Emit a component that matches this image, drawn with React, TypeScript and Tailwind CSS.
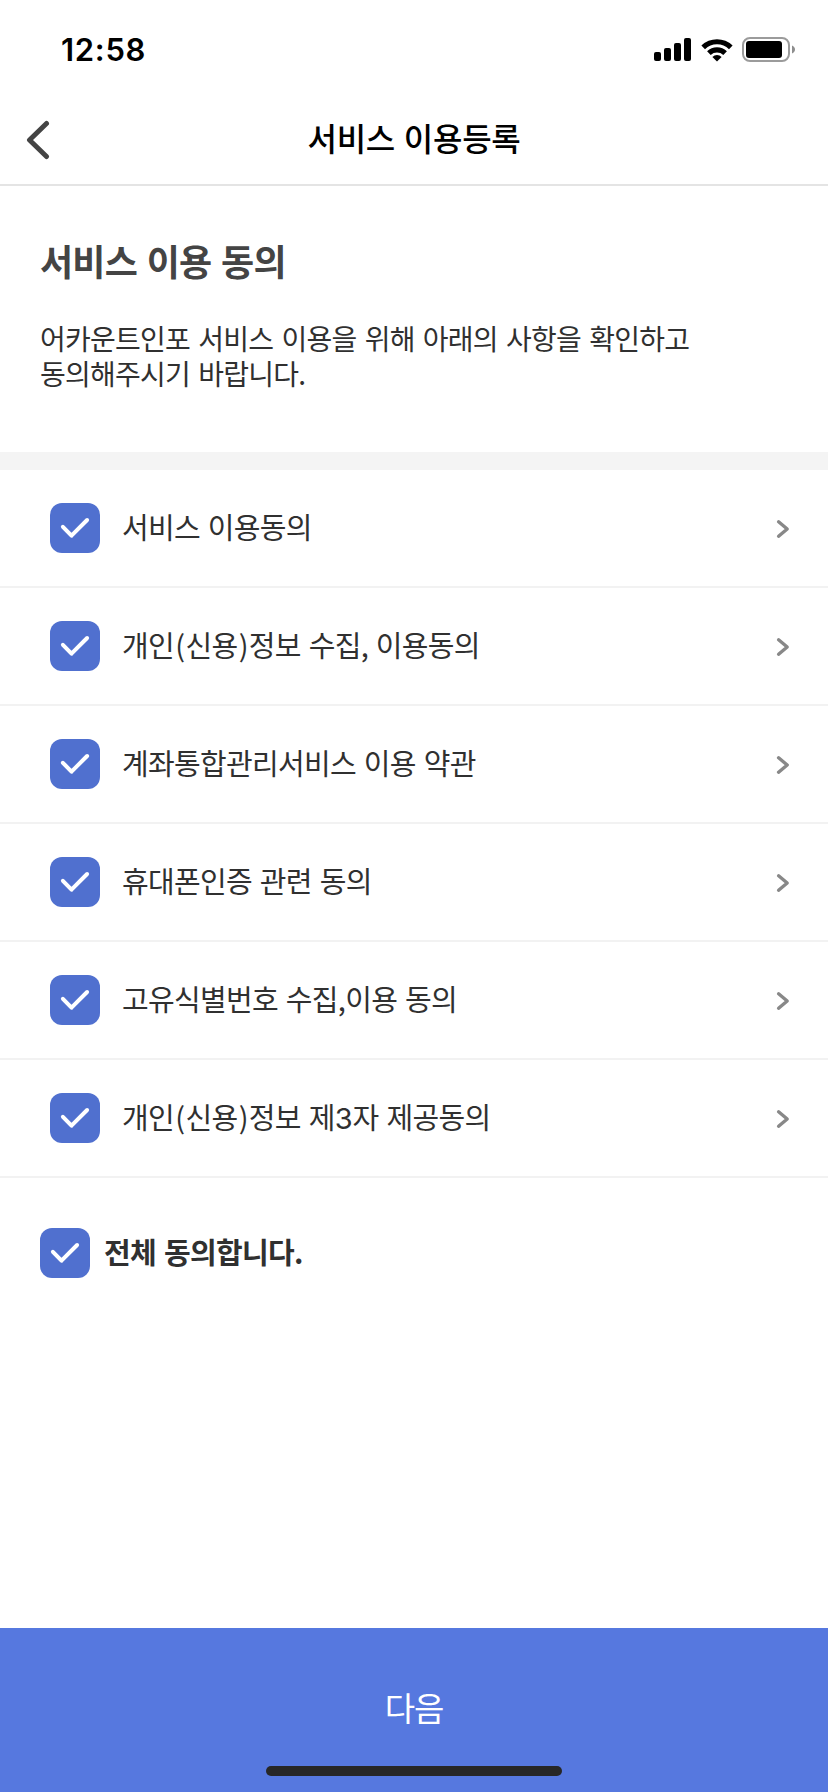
import { useState } from "react";

type Agreement = {
  id: number;
  label: string;
};

const AGREEMENTS: Agreement[] = [
  { id: 1, label: "서비스 이용동의" },
  { id: 2, label: "개인(신용)정보 수집, 이용동의" },
  { id: 3, label: "계좌통합관리서비스 이용 약관" },
  { id: 4, label: "휴대폰인증 관련 동의" },
  { id: 5, label: "고유식별번호 수집,이용 동의" },
  { id: 6, label: "개인(신용)정보 제3자 제공동의" },
];

function StatusBar() {
  return (
    <div className="flex h-[98px] items-center justify-between pr-8 pl-[61px]">
      <span className="pt-px font-['Inter',sans-serif] text-[31px] leading-none font-semibold tracking-[0.7px] text-black">
        12:58
      </span>
      <div className="flex items-center pt-[2px]">
        <svg width="38" height="24" viewBox="0 0 38 24" className="mr-[9px]">
          <rect x="0" y="14" width="7" height="9" rx="2" />
          <rect x="10" y="10" width="7" height="13" rx="2" />
          <rect x="20" y="5" width="7" height="18" rx="2" />
          <rect x="30" y="0" width="7" height="23" rx="2" />
        </svg>
        <svg width="32" height="24" viewBox="0 0 32 24" className="mr-[9px]">
          <path d="M0.4 7.6a22.2 22.2 0 0 1 31.2 0l-3.6 3.6a17.2 17.2 0 0 0-24 0z" />
          <path d="M6.1 13.3a14.2 14.2 0 0 1 19.8 0l-3.6 3.6a9.2 9.2 0 0 0-12.6 0z" />
          <path d="M11.4 18.9a6.8 6.8 0 0 1 9.2 0L16 23.6z" />
        </svg>
        <svg width="54" height="26" viewBox="0 0 54 26">
          <rect
            x="1"
            y="1"
            width="46"
            height="23"
            rx="7"
            fill="none"
            stroke="#9b9b9b"
            strokeWidth="2"
          />
          <rect x="4" y="4" width="36" height="17" rx="3" />
          <path d="M50 8.5c4 1.6 4 6.4 0 8z" fill="#8e8e8e" />
        </svg>
      </div>
    </div>
  );
}

function Checkbox({
  checked,
  label,
  onChange,
}: {
  checked: boolean;
  label: string;
  onChange: () => void;
}) {
  return (
    <button
      type="button"
      role="checkbox"
      aria-checked={checked}
      aria-label={label}
      onClick={onChange}
      className={
        checked
          ? "size-[50px] shrink-0 rounded-xl bg-[#5070cf]"
          : "size-[50px] shrink-0 rounded-xl bg-gray-300"
      }
    >
      <svg width="50" height="50" viewBox="0 0 50 50" fill="none">
        <path
          d="M12.9 23.8L21.5 32.7L37.1 17"
          stroke="white"
          strokeWidth="4"
          strokeLinecap="round"
          strokeLinejoin="round"
        />
      </svg>
    </button>
  );
}

/** Parentheses and digits sit looser than the Hangul around them. */
function AgreementLabel({ text }: { text: string }) {
  return text.split(/([()\d])/).map((part, index) => {
    if (part === "(" || part === ")") {
      return (
        <span key={index} className="ml-[1.3px] tracking-[0.3px]">
          {part}
        </span>
      );
    }
    if (/^\d$/.test(part)) {
      return (
        <span
          key={index}
          className="font-['Inter',sans-serif] leading-none tracking-normal"
        >
          {part}
        </span>
      );
    }
    return part;
  });
}

export default function App() {
  const [checkedIds, setCheckedIds] = useState<number[]>(
    AGREEMENTS.map((item) => item.id),
  );
  const allChecked = checkedIds.length === AGREEMENTS.length;

  const toggle = (id: number) =>
    setCheckedIds((ids) =>
      ids.includes(id) ? ids.filter((value) => value !== id) : [...ids, id],
    );

  const toggleAll = () =>
    setCheckedIds(allChecked ? [] : AGREEMENTS.map((item) => item.id));

  return (
    <div className="flex h-[1792px] w-[828px] flex-col bg-white font-['Noto_Sans_CJK_KR',sans-serif] text-[#303030]">
      <StatusBar />

      <header className="grid h-[88px] grid-cols-[120px_1fr_120px] items-center border-b-2 border-[#e4e4e4]">
        <button type="button" aria-label="뒤로" className="pb-[2px] pl-[26px]">
          <svg width="24" height="40" viewBox="0 0 24 40" fill="none">
            <path
              d="M20.5 3.5L3.5 20L20.5 36.5"
              stroke="#444444"
              strokeWidth="5"
              strokeLinecap="round"
              strokeLinejoin="round"
            />
          </svg>
        </button>
        <h1 className="pb-2 text-center text-[32px] leading-10 font-medium tracking-[-0.3px] text-black [word-spacing:2px]">
          서비스 이용등록
        </h1>
      </header>

      <section className="h-[266px] px-10 pt-[54px]">
        <h2 className="text-4xl leading-10 font-bold tracking-[-0.75px] text-[#444444] [word-spacing:2.2px]">
          서비스 이용 동의
        </h2>
        <p className="mt-[41px] text-[28px] leading-[35px] tracking-[-0.76px] [word-spacing:2.7px]">
          어카운트인포 서비스 이용을 위해 아래의 사항을 확인하고
          <br />
          동의해주시기 바랍니다.
        </p>
      </section>

      <div className="h-[18px] bg-[#f4f4f4]" />

      <ul>
        {AGREEMENTS.map((item) => (
          <li
            key={item.id}
            className="flex h-[118px] items-center border-b-2 border-[#f2f2f2] pr-[37px] pl-[50px]"
          >
            <Checkbox
              checked={checkedIds.includes(item.id)}
              label={item.label}
              onChange={() => toggle(item.id)}
            />
            <span className="ml-[22px] flex-1 pb-[5px] text-[29px] leading-10 tracking-[-0.68px] [word-spacing:2px]">
              <AgreementLabel text={item.label} />
            </span>
            <svg width="16" height="22" viewBox="0 0 16 22" fill="none">
              <path
                d="M3.6 4.8L12.2 12L3.6 19.2"
                stroke="#888888"
                strokeWidth="3.4"
                strokeLinecap="round"
                strokeLinejoin="round"
              />
            </svg>
          </li>
        ))}
      </ul>

      <div className="mt-[50px] flex items-center px-10">
        <Checkbox
          checked={allChecked}
          label="전체 동의합니다."
          onChange={toggleAll}
        />
        <span className="ml-3.5 pb-[5px] text-[29px] leading-10 font-bold tracking-[-0.68px] [word-spacing:2px]">
          전체 동의합니다.
        </span>
      </div>

      <button
        type="button"
        className="mt-auto flex h-[164px] flex-col items-center bg-[#5678df] pt-[57px] text-[33px] leading-[44px] tracking-[-1.2px] text-white"
      >
        다음
        <span className="mt-[37px] h-2.5 w-[296px] rounded-full bg-[#272727]" />
      </button>
    </div>
  );
}
